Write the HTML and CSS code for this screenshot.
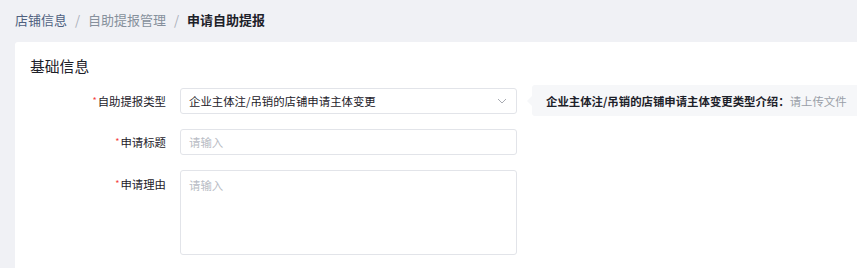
FILE: index.html
```html
<!DOCTYPE html>
<html lang="zh-CN">
  <head>
    <meta charset="UTF-8" />
    <meta name="viewport" content="width=device-width, initial-scale=1.0" />
    <title>申请自助提报</title>
    <link rel="stylesheet" href="styles.css">
  </head>
  <body>
    <div class="page">
      <div class="breadcrumb">
        <span class="crumb link">店铺信息</span>
        <span class="sep">/</span>
        <span class="crumb">自助提报管理</span>
        <span class="sep">/</span>
        <span class="crumb current">申请自助提报</span>
      </div>
      <div class="card">
        <h2 class="card-title">基础信息</h2>
        <form class="form">
          <div class="form-row">
            <label class="form-label"><i class="req">*</i>自助提报类型</label>
            <div class="select">
              <span class="select-value">企业主体注/吊销的店铺申请主体变更</span>
              <svg class="chevron" width="10" height="6" viewBox="0 0 10 6">
                <path d="M1 1l4 4 4-4" fill="none" stroke="#a8abb2" stroke-width="1" />
              </svg>
            </div>
            <div class="tip">
              <b>企业主体注/吊销的店铺申请主体变更类型介绍：</b><span class="tip-muted">请上传文件</span>
            </div>
          </div>
          <div class="form-row">
            <label class="form-label"><i class="req">*</i>申请标题</label>
            <input class="input" type="text" placeholder="请输入" />
          </div>
          <div class="form-row top">
            <label class="form-label"><i class="req">*</i>申请理由</label>
            <textarea class="input textarea" placeholder="请输入"></textarea>
          </div>
        </form>
      </div>
    </div>
  </body>
</html>
```

FILE: styles.css
```css
body {
  margin: 0;
  padding: 0;
  background-color: #f0f1f5;
  font-family: "Noto Sans CJK SC", sans-serif;
  color: #1d2129;
  overflow: hidden;
}
.page {
  padding: 11px 0 0 15px;
}
.breadcrumb {
  font-size: 13px;
  line-height: 18px;
  color: #86909c;
}
.breadcrumb .link {
  color: #4e5f7e;
}
.breadcrumb .sep {
  margin: 0 5px;
  color: #a9aeb8;
}
.breadcrumb .current {
  color: #1d2129;
  font-weight: bold;
}
.card {
  margin-top: 13px;
  background-color: #ffffff;
  border-radius: 3px 0 0 0;
  padding: 13px 15px 40px;
}
.card-title {
  margin: 0;
  font-size: 14.8px;
  font-weight: normal;
  line-height: 22px;
  color: #1d2129;
}
.form {
  margin-top: 11px;
  display: flex;
  flex-direction: column;
  gap: 15px;
}
.form-row {
  display: flex;
  align-items: center;
}
.form-row.top {
  align-items: flex-start;
}
.form-label {
  width: 136px;
  padding-right: 14px;
  text-align: right;
  font-size: 11.4px;
  line-height: 26px;
  color: #1d2129;
  flex-shrink: 0;
}
.form-row.top .form-label {
  line-height: 28px;
}
.req {
  font-style: normal;
  color: #f53f3f;
  font-size: 9px;
  vertical-align: 2px;
  margin-right: 1px;
}
.select,
.input {
  box-sizing: border-box;
  width: 337px;
  height: 26px;
  flex-shrink: 0;
  border: 1px solid #e2e4e9;
  border-radius: 3px;
  background-color: #ffffff;
  font-family: inherit;
  font-size: 11.4px;
  color: #1d2129;
  padding: 0 8px;
  margin: 0;
  outline: none;
}
.select {
  display: flex;
  align-items: center;
  justify-content: space-between;
}
.chevron {
  margin-right: 1px;
}
.input::placeholder {
  color: #b8bcc4;
}
.textarea {
  height: 85px;
  padding: 5px 8px;
  line-height: 18px;
  resize: none;
  display: block;
}
.tip {
  position: relative;
  margin: -3px 0 -2px 15px;
  height: 31px;
  padding: 0 15px 0 14px;
  background-color: #f6f7f9;
  border-radius: 3px;
  display: flex;
  align-items: center;
  font-size: 11.4px;
  white-space: nowrap;
}
.tip::before {
  content: "";
  position: absolute;
  left: -5px;
  top: 50%;
  margin-top: -5px;
  border-style: solid;
  border-width: 5px 5px 5px 0;
  border-color: transparent #f6f7f9 transparent transparent;
}
.tip b {
  color: #1d2129;
}
.tip-muted {
  color: #9a9fa8;
}
```
